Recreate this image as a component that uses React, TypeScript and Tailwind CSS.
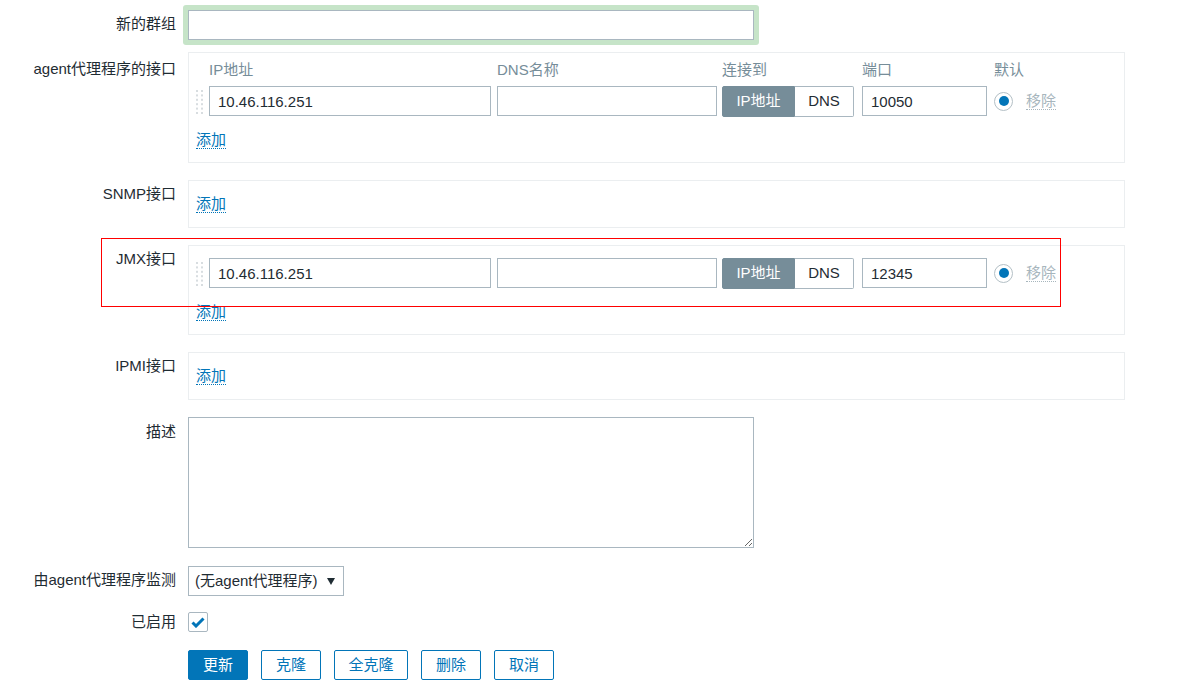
import type { ReactNode } from "react";

const font = { fontFamily: '"Liberation Sans", "Noto Sans CJK SC", sans-serif' };

function Row({ label, pt = "pt-[6px]", children, className = "" }: { label: string; pt?: string; children: ReactNode; className?: string }) {
  return (
    <div className={`flex ${className}`}>
      <div className={`w-[176px] shrink-0 text-right leading-4 ${pt}`}>{label}</div>
      <div className="ml-3">{children}</div>
    </div>
  );
}

function AddLink() {
  return (
    <span className="inline-block leading-4 text-[#0275b8] border-b border-dotted border-[#0275b8]">添加</span>
  );
}

function DragHandle() {
  return (
    <svg width="8" height="26" viewBox="0 0 8 26" className="mt-[2px]">
      {[0, 1, 2, 3, 4, 5].map((r) =>
        [0, 5].map((c) => <rect key={`${r}-${c}`} x={c} y={r * 4.4 + 1} width="2" height="2" fill="#d8dde0" />)
      )}
    </svg>
  );
}

function InterfaceRow({ ip, port }: { ip: string; port: string }) {
  return (
    <>
      <div className="flex items-center h-[30px]">
        <DragHandle />
      </div>
      <div>
        <input
          readOnly
          value={ip}
          className="w-[282px] h-[30px] border border-[#a9b7c0] px-2 text-[#1f2c33] outline-none"
          style={font}
        />
      </div>
      <div>
        <input readOnly value="" className="w-[220px] h-[30px] border border-[#a9b7c0] px-2 outline-none" />
      </div>
      <div className="flex h-[31px]">
        <div className="w-[73px] flex items-center justify-center bg-[#768d99] border border-[#768d99] text-white rounded-l-[2px]">
          IP地址
        </div>
        <div className="w-[59px] flex items-center justify-center bg-white border border-l-0 border-[#a9b7c0] text-[#1f2c33] rounded-r-[2px]">
          DNS
        </div>
      </div>
      <div>
        <input
          readOnly
          value={port}
          className="w-[125px] h-[30px] border border-[#a9b7c0] px-2 text-[#1f2c33] outline-none"
          style={font}
        />
      </div>
      <div className="flex items-center h-[30px]">
        <span className="w-[19px] h-[19px] rounded-full border border-[#b4c0c6] flex items-center justify-center">
          <span className="w-[10px] h-[10px] rounded-full bg-[#0275b8]" />
        </span>
        <span className="ml-[13px] leading-4 text-[#a7b6bd] border-b border-dotted border-[#a7b6bd]">移除</span>
      </div>
    </>
  );
}

const gridCols = "grid grid-cols-[13px_288px_225px_140px_132px_auto]";

export default function App() {
  return (
    <div className="relative w-[1183px] h-[694px] bg-white text-[15px] text-[#1f2c33] pt-[10px]" style={font}>
      <Row label="新的群组">
        <div className="-m-[5px] p-[5px] rounded-[3px] bg-[#c6e4c8] w-fit">
          <input readOnly value="" className="block w-[566px] h-[30px] border border-[#a9b7c0] bg-white outline-none" />
        </div>
      </Row>

      <Row label="agent代理程序的接口" pt="pt-[9px]" className="mt-3">
        <div className="w-[937px] h-[111px] border border-[#ebeef0] pl-[7px] pt-[9px]">
          <div className={`${gridCols} text-[#768d99] leading-4`}>
            <div />
            <div>IP地址</div>
            <div>DNS名称</div>
            <div>连接到</div>
            <div>端口</div>
            <div>默认</div>
          </div>
          <div className={`${gridCols} mt-2`}>
            <InterfaceRow ip="10.46.116.251" port="10050" />
          </div>
          <div className="mt-[12px]">
            <AddLink />
          </div>
        </div>
      </Row>

      <Row label="SNMP接口" className="mt-[17px]">
        <div className="w-[937px] h-[48px] border border-[#ebeef0] pl-[7px] pt-[12px]">
          <AddLink />
        </div>
      </Row>

      <Row label="JMX接口" className="mt-[17px]">
        <div className="w-[937px] h-[90px] border border-[#ebeef0] pl-[7px] pt-[12px]">
          <div className={gridCols}>
            <InterfaceRow ip="10.46.116.251" port="12345" />
          </div>
          <div className="mt-[12px]">
            <AddLink />
          </div>
        </div>
      </Row>

      <Row label="IPMI接口" className="mt-[17px]">
        <div className="w-[937px] h-[48px] border border-[#ebeef0] pl-[7px] pt-[12px]">
          <AddLink />
        </div>
      </Row>

      <Row label="描述" pt="pt-[7px]" className="mt-[17px]">
        <textarea readOnly className="block w-[566px] h-[131px] border border-[#a9b7c0] outline-none" />
      </Row>

      <Row label="由agent代理程序监测" className="mt-[18px]">
        <div className="w-[156px] h-[30px] border border-[#a9b7c0] flex items-center justify-between pl-[6px] pr-[8px]">
          <span>(无agent代理程序)</span>
          <svg width="8" height="7" viewBox="0 0 8 7">
            <path d="M0 0 L8 0 L4 7 Z" fill="#1f2c33" />
          </svg>
        </div>
      </Row>

      <Row label="已启用" pt="pt-[2px]" className="mt-[16px]">
        <div className="w-[20px] h-[20px] border border-[#a9b7c0] rounded-[2px] flex items-center justify-center">
          <svg width="14" height="11" viewBox="0 0 14 11">
            <path d="M1.5 5.5 L5 9 L12.5 1.5" fill="none" stroke="#0275b8" strokeWidth="3" />
          </svg>
        </div>
      </Row>

      <Row label="" className="mt-[18px]">
        <div className="flex gap-[13px]">
          <button className="w-[60px] h-[30px] bg-[#0275b8] border border-[#0275b8] text-white rounded-[2px]">更新</button>
          <button className="w-[60px] h-[30px] bg-white border border-[#0275b8] text-[#0275b8] rounded-[2px]">克隆</button>
          <button className="w-[74px] h-[30px] bg-white border border-[#0275b8] text-[#0275b8] rounded-[2px]">全克隆</button>
          <button className="w-[60px] h-[30px] bg-white border border-[#0275b8] text-[#0275b8] rounded-[2px]">删除</button>
          <button className="w-[60px] h-[30px] bg-white border border-[#0275b8] text-[#0275b8] rounded-[2px]">取消</button>
        </div>
      </Row>

      <div className="absolute left-[101px] top-[238px] w-[960px] h-[69px] border border-[#ff0000] pointer-events-none" />
    </div>
  );
}
